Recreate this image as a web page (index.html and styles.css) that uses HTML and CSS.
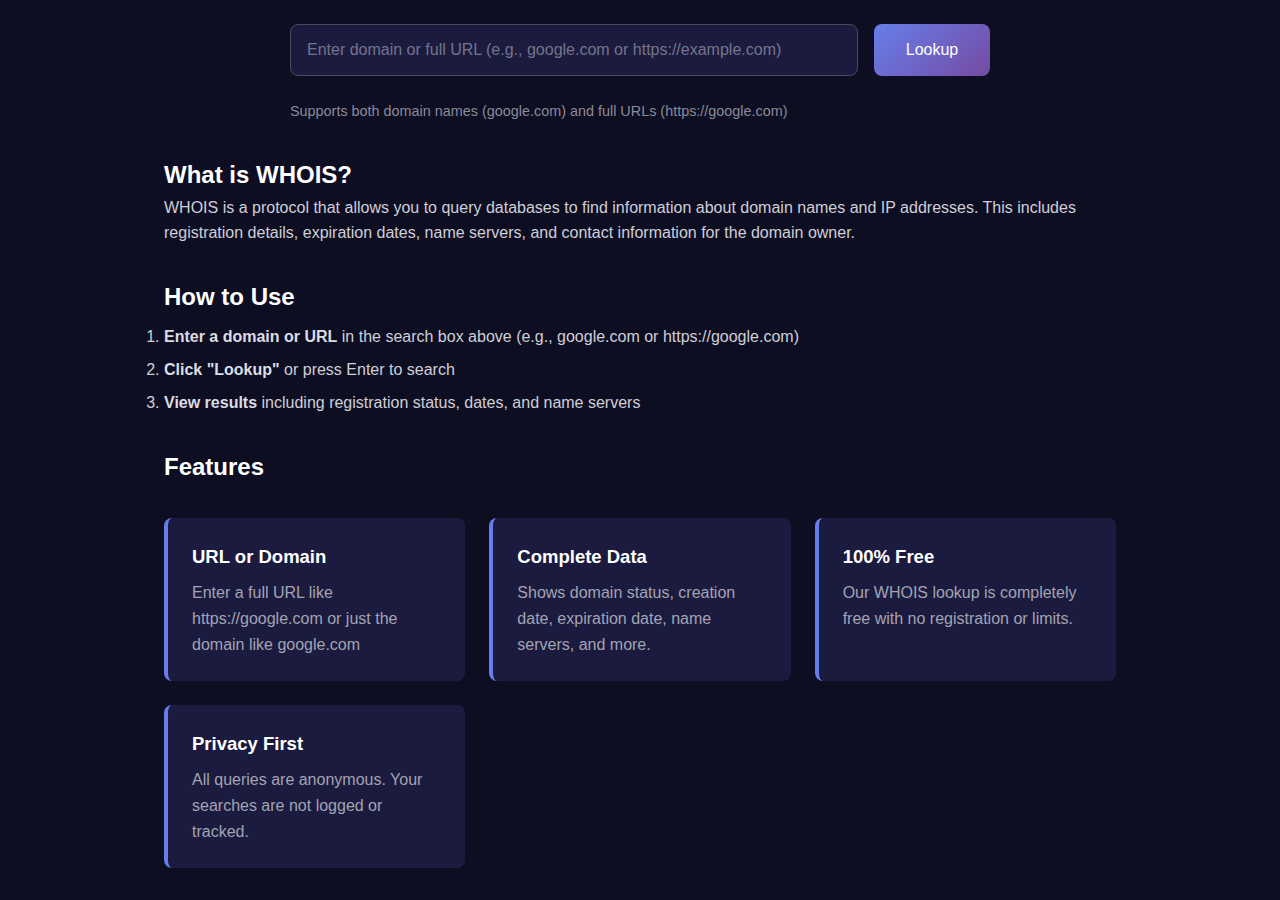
FILE: index.html
```html
<!DOCTYPE html>
<html lang="en">
<head>
<meta charset="utf-8">
<title>WHOIS Lookup</title>
<link rel="stylesheet" href="styles.css">
</head>
<body>
<div class="page">
  <div class="search">
    <div class="search-row">
      <input class="search-input" type="text" placeholder="Enter domain or full URL (e.g., google.com or https://example.com)">
      <button class="search-btn">Lookup</button>
    </div>
    <p class="hint">Supports both domain names (google.com) and full URLs (https://google.com)</p>
  </div>

  <section class="info info-first">
    <h2 class="info-title">What is WHOIS?</h2>
    <p class="info-text">WHOIS is a protocol that allows you to query databases to find information about domain names and IP addresses. This includes registration details, expiration dates, name servers, and contact information for the domain owner.</p>
  </section>

  <section class="info">
    <h2 class="info-title">How to Use</h2>
    <ol class="steps">
      <li><strong>Enter a domain or URL</strong> in the search box above (e.g., google.com or https://google.com)</li>
      <li><strong>Click "Lookup"</strong> or press Enter to search</li>
      <li><strong>View results</strong> including registration status, dates, and name servers</li>
    </ol>
  </section>

  <section class="info">
    <h2 class="info-title">Features</h2>
    <div class="features">
      <div class="card">
        <h3 class="card-title">URL or Domain</h3>
        <p class="card-text">Enter a full URL like https://google.com or just the domain like google.com</p>
      </div>
      <div class="card">
        <h3 class="card-title">Complete Data</h3>
        <p class="card-text">Shows domain status, creation date, expiration date, name servers, and more.</p>
      </div>
      <div class="card">
        <h3 class="card-title">100% Free</h3>
        <p class="card-text">Our WHOIS lookup is completely free with no registration or limits.</p>
      </div>
      <div class="card">
        <h3 class="card-title">Privacy First</h3>
        <p class="card-text">All queries are anonymous. Your searches are not logged or tracked.</p>
      </div>
    </div>
  </section>
</div>
</body>
</html>
```

FILE: styles.css
```css
* { box-sizing: border-box; }

html, body {
  margin: 0;
  padding: 0;
  background: #0e0e23;
}

body {
  font-family: "Liberation Sans", Arial, sans-serif;
  color: #cfcfd8;
}

.page {
  max-width: 1000px;
  margin: 0 auto;
  padding: 24px 24px 40px;
}

.search {
  max-width: 700px;
  margin: 0 auto;
}

.search-row {
  display: flex;
  gap: 16px;
}

.search-input {
  flex: 1;
  height: 52px;
  padding: 0 16px;
  font-family: inherit;
  font-size: 16px;
  color: #e6e6f0;
  background: #1b1b3f;
  border: 1px solid #4a4a5c;
  border-radius: 8px;
  outline: none;
}

.search-input::placeholder {
  color: #74748a;
}

.search-btn {
  width: 116px;
  height: 52px;
  border: none;
  border-radius: 8px;
  font-family: inherit;
  font-size: 16px;
  color: #ffffff;
  background: linear-gradient(135deg, #667eea 0%, #764ba2 100%);
  cursor: pointer;
}

.hint {
  margin: 25px 0 0;
  font-size: 14.4px;
  line-height: 20px;
  color: #8a8a98;
}

.info {
  margin-top: 38px;
}

.info-first {
  margin-top: 40px;
}

.info-title {
  margin: 0;
  font-size: 24px;
  line-height: 28px;
  font-weight: bold;
  color: #ffffff;
}

.info-text {
  margin: 6px 0 0;
  font-size: 16px;
  line-height: 25px;
  color: #cfcfd8;
}

.steps {
  margin: 13px 0 0;
  padding-left: 0;
  list-style-position: outside;
}

.steps li {
  font-size: 16px;
  line-height: 25px;
  margin-bottom: 8px;
  color: #cfcfd8;
}

.steps li:last-child { margin-bottom: 0; }

.steps strong {
  color: #dcdce4;
}

.features {
  margin-top: 37px;
  display: grid;
  grid-template-columns: repeat(3, 1fr);
  gap: 24px;
}

.card {
  background: #1b1b3f;
  border-left: 4px solid #667eea;
  border-radius: 8px;
  padding: 24px 24px 23px;
}

.card-title {
  margin: 0 0 9px;
  font-size: 18.5px;
  line-height: 29px;
  font-weight: bold;
  color: #ffffff;
}

.card-text {
  margin: 0;
  font-size: 16px;
  line-height: 26px;
  color: #a3a3b2;
}
```
